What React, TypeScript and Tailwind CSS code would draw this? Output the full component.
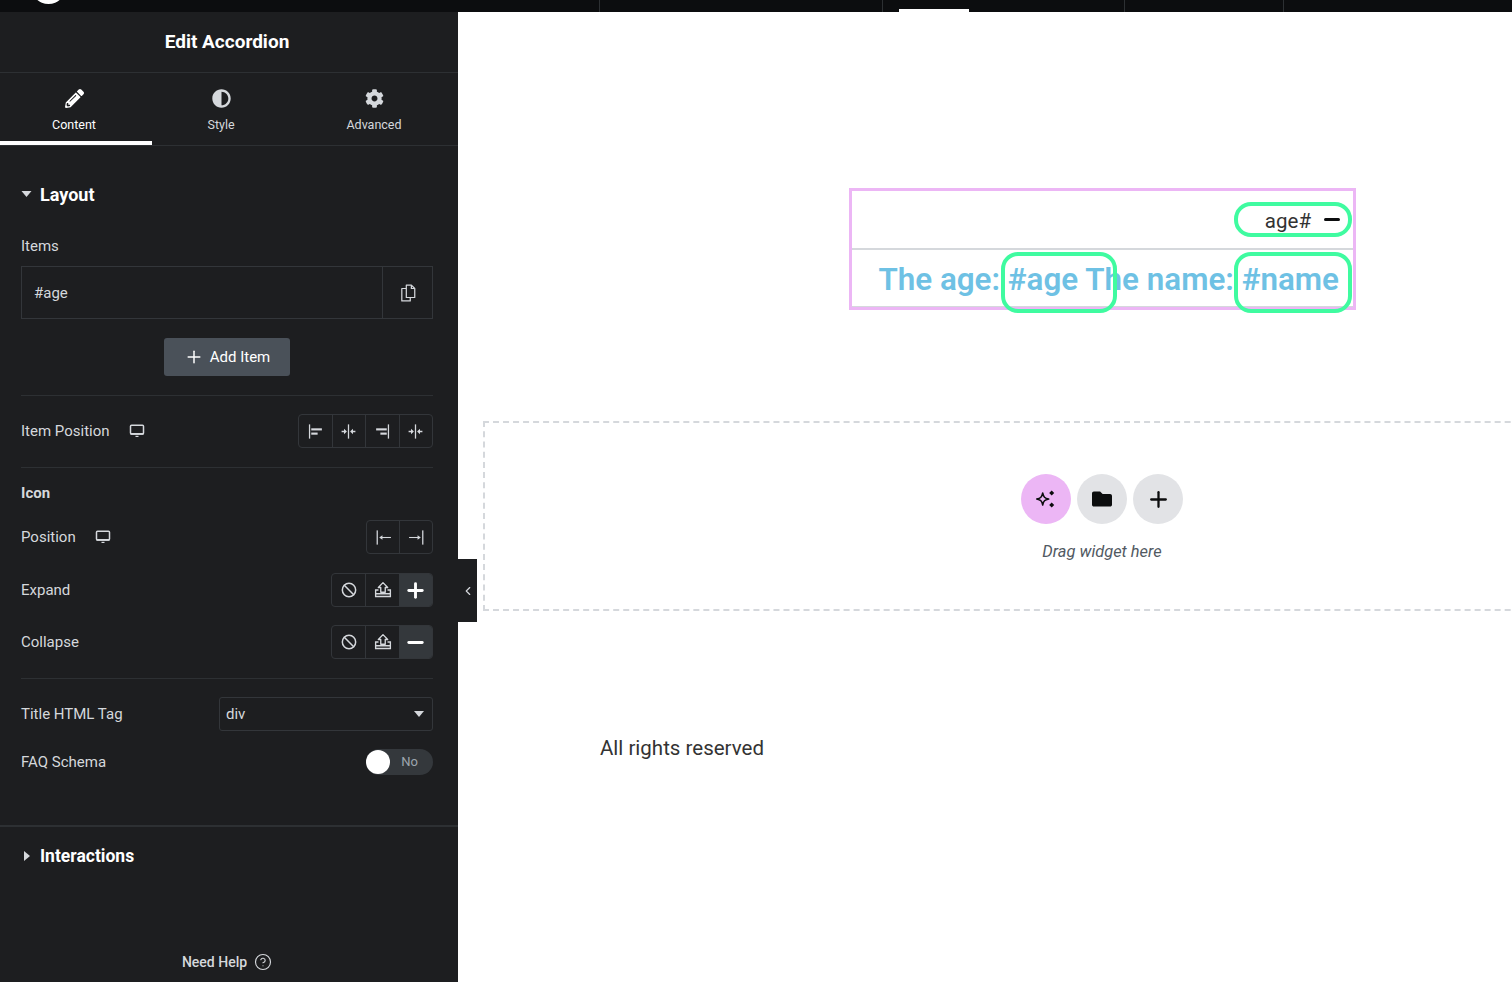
import type { ReactNode } from "react";
import { Ban, ChevronLeft, CircleHelp, Minus, Plus } from "lucide-react";
import { FaAdjust, FaCog, FaFolder, FaPencilAlt } from "react-icons/fa";

function Desktop() {
  return (
    <svg viewBox="0 0 16 16" className="h-4 w-4 text-[#d5d8dc]" fill="none">
      <rect x="1.500" y="2.200" width="13" height="8.800" rx="1" stroke="currentColor" strokeWidth="1.500" />
      <path d="M6.500 12.800h3v1.200h-3z" fill="currentColor" />
      <path d="M1.500 10h13v1.800h-13z" fill="currentColor" />
    </svg>
  );
}

function AlignStart() {
  return (
    <svg viewBox="0 0 16 16" className="h-[17px] w-[17px]" fill="currentColor">
      <rect x="1.800" y="1.300" width="1.200" height="13.400" />
      <rect x="4" y="5" width="10" height="2" />
      <rect x="4" y="9" width="6" height="2" />
    </svg>
  );
}

function AlignEnd() {
  return (
    <svg viewBox="0 0 16 16" className="h-[17px] w-[17px]" fill="currentColor">
      <rect x="13" y="1.300" width="1.200" height="13.400" />
      <rect x="2" y="5" width="10" height="2" />
      <rect x="6" y="9" width="6" height="2" />
    </svg>
  );
}

function AlignMiddle() {
  return (
    <svg viewBox="0 0 16 16" className="h-[17px] w-[17px]" fill="currentColor">
      <rect x="7.400" y="1.300" width="1.200" height="13.400" />
      <path d="M1.500 7.300h2.300V5.300L6.500 8l-2.700 2.700V8.700H1.500z" />
      <path d="M14.500 7.300h-2.300V5.300L9.500 8l2.700 2.700V8.700h2.300z" />
    </svg>
  );
}

function ArrowStart() {
  return (
    <svg viewBox="0 0 16 16" className="h-[17px] w-[17px]" fill="currentColor">
      <rect x="1.500" y="1.300" width="1.200" height="13.400" />
      <rect x="5" y="7.500" width="10" height="1" />
      <path d="M4 8l3-2.200v4.400z" />
    </svg>
  );
}

function ArrowEnd() {
  return (
    <svg viewBox="0 0 16 16" className="h-[17px] w-[17px]" fill="currentColor">
      <rect x="13.300" y="1.300" width="1.200" height="13.400" />
      <rect x="1" y="7.500" width="10" height="1" />
      <path d="M12 8L9 5.800v4.400z" />
    </svg>
  );
}

function Upload() {
  return (
    <svg viewBox="0 0 20 20" className="h-[18px] w-[18px]" fill="none" stroke="currentColor" strokeWidth="1.500">
      <path d="M10 1.800l5.200 5.400h-2.700v5.300h-5V7.200H4.800z" strokeLinejoin="round" />
      <path d="M5 10H1.800v7.200h16.400V10H15" />
      <path d="M1.800 14.200h16.400" />
    </svg>
  );
}

function CopyDocs() {
  return (
    <svg viewBox="0 0 16 16" className="h-[18px] w-[18px]" fill="none" stroke="currentColor" strokeWidth="1.100">
      <path d="M6.500 1h4.500l3 3v8H6.500z" strokeLinejoin="round" />
      <path d="M6.500 4H2.500v11h7.500v-3" strokeLinejoin="round" />
      <path d="M11 1v3h3" />
    </svg>
  );
}

function Sparkles() {
  return (
    <svg viewBox="0 0 20 20" className="h-5 w-5" fill="none">
      <path d="M6.700 4c.8 4 2 5.200 6 6-4 .8-5.200 2-6 6-.8-4-2-5.200-6-6 4-.8 5.200-2 6-6z" stroke="#0c0d0e" strokeWidth="1.500" strokeLinejoin="round" />
      <path d="M15.700 1.500l2.500 2.500-2.500 2.500-2.500-2.500z" fill="#0c0d0e" />
      <path d="M15.700 13.500l2.500 2.500-2.500 2.500-2.500-2.500z" fill="#0c0d0e" />
    </svg>
  );
}

function Segments({ items, width }: { items: ReactNode[]; width: string }) {
  return (
    <div className={`flex h-[34px] overflow-hidden rounded-[4px] border border-[#33363a] text-[#d5d8dc] ${width}`}>
      {items.map((item, i) => (
        <div key={i} className="flex flex-1 items-center justify-center border-l border-[#33363a] first:border-l-0">
          {item}
        </div>
      ))}
    </div>
  );
}

function IconChoice({ active }: { active: ReactNode }) {
  return (
    <div className="flex h-[34px] w-[102px] overflow-hidden rounded-[4px] border border-[#33363a] text-[#d5d8dc]">
      <div className="flex flex-1 items-center justify-center">
        <Ban size={16} strokeWidth={2.25} />
      </div>
      <div className="flex flex-1 items-center justify-center border-l border-[#33363a]">
        <Upload />
      </div>
      <div className="flex flex-1 items-center justify-center bg-[#34383c] text-white">{active}</div>
    </div>
  );
}

function Row({ label, icon, children, className }: { label: string; icon?: boolean; children: ReactNode; className: string }) {
  return (
    <div className={`flex items-center justify-between ${className}`}>
      <div className="flex items-center gap-[19px] text-[15px] text-[#d5d8dc]">
        <span>{label}</span>
        {icon && <Desktop />}
      </div>
      {children}
    </div>
  );
}

function Tab({ icon, label, width, active }: { icon: ReactNode; label: string; width: string; active?: boolean }) {
  return (
    <div className={`flex h-[72px] flex-col items-center pt-[15px] ${width} ${active ? "border-b-4 border-white pr-[4px] text-white" : "text-[#d5d8dc]"}`}>
      <div className="flex h-[20px] items-center text-[19px]">{icon}</div>
      <span className="mt-[9px] text-[12.500px] leading-[16px]">{label}</span>
    </div>
  );
}

function Sidebar() {
  return (
    <aside className="flex h-[970px] w-[458px] shrink-0 flex-col bg-[#1d1e20]">
      <div className="flex h-[61px] items-center justify-center border-b border-[#2d3033] pr-[4px] text-[19px] font-bold text-white">
        Edit Accordion
      </div>
      <div className="flex h-[73px] border-b border-[#2d3033]">
        <Tab icon={<FaPencilAlt />} label="Content" width="w-[152px]" active />
        <Tab icon={<FaAdjust />} label="Style" width="w-[138px]" />
        <Tab icon={<FaCog />} label="Advanced" width="w-[168px]" />
      </div>

      <div className="pl-[21px] pr-[25px]">
        <div className="mt-[38px] flex h-[20px] items-center gap-[8px] text-[18px] font-bold text-white">
          <svg viewBox="0 0 10 6" className="h-[6px] w-[11px]" fill="#d5d8dc">
            <path d="M0 0h10L5 6z" />
          </svg>
          Layout
        </div>
        <div className="mt-[32px] h-[20px] text-[15px] leading-[20px] text-[#d5d8dc]">Items</div>
        <div className="mt-[10px] flex h-[53px] border border-[#33363a] text-[#d5d8dc]">
          <div className="flex flex-1 items-center pl-[12px] pt-[1px] text-[15px]">#age</div>
          <div className="flex w-[50px] items-center justify-center border-l border-[#33363a]">
            <CopyDocs />
          </div>
        </div>
        <div className="mt-[19px] flex justify-center">
          <div className="flex h-[38px] w-[126px] items-center justify-center gap-[6px] rounded-[3px] bg-[#4a5159] text-[15px] text-white">
            <Plus size={20} strokeWidth={1.8} />
            Add Item
          </div>
        </div>
        <div className="mt-[19px] h-px bg-[#2d3033]" />
        <Row label="Item Position" icon className="mt-[18px]">
          <Segments width="w-[135px]" items={[<AlignStart key="a" />, <AlignMiddle key="b" />, <AlignEnd key="c" />, <AlignMiddle key="d" />]} />
        </Row>
        <div className="mt-[19px] h-px bg-[#2d3033]" />
        <div className="mt-[15px] h-[20px] text-[15px] font-bold leading-[20px] text-[#d5d8dc]">Icon</div>
        <Row label="Position" icon className="mt-[17px]">
          <Segments width="w-[67px]" items={[<ArrowStart key="a" />, <ArrowEnd key="b" />]} />
        </Row>
        <Row label="Expand" className="mt-[19px]">
          <IconChoice active={<Plus size={23} strokeWidth={3} />} />
        </Row>
        <Row label="Collapse" className="mt-[18px]">
          <IconChoice active={<Minus size={23} strokeWidth={3} />} />
        </Row>
        <div className="mt-[19px] h-px bg-[#2d3033]" />
        <Row label="Title HTML Tag" className="mt-[18px]">
          <div className="flex h-[34px] w-[214px] items-center justify-between rounded-[3px] border border-[#33363a] pl-[6px] pr-[8px] text-[15px] text-[#d5d8dc]">
            div
            <svg viewBox="0 0 10 6" className="h-[6px] w-[10px]" fill="#d5d8dc">
              <path d="M0 0h10L5 6z" />
            </svg>
          </div>
        </Row>
        <Row label="FAQ Schema" className="mt-[18px]">
          <div className="flex h-[26px] w-[67px] items-center justify-between rounded-full bg-[#34383c] pr-[15px] text-[13px] text-[#9da5ae]">
            <div className="h-[24px] w-[24px] rounded-full bg-white" />
            No
          </div>
        </Row>
      </div>

      <div className="mt-[50px] border-t-2 border-[#2d3033]" />
      <div className="mt-[19px] flex h-[20px] items-center gap-[10px] pl-[24px] text-[17.500px] font-bold text-white">
        <svg viewBox="0 0 6 10" className="h-[10px] w-[6px]" fill="#d5d8dc">
          <path d="M0 0l6 5-6 5z" />
        </svg>
        Interactions
      </div>
      <div className="mt-auto mb-[10px] flex h-[20px] items-center justify-center gap-[7px] pr-[4px] text-[14px] font-medium text-[#d5d8dc]">
        Need Help
        <CircleHelp size={18} strokeWidth={1.5} />
      </div>
    </aside>
  );
}

function Canvas() {
  return (
    <main className="h-[970px] flex-1 overflow-hidden bg-white">
      <div className="relative mt-[176px] ml-[391px] h-[122px] w-[507px] border-[3px] border-[#ecb6f5]">
        <div className="flex h-[59px] items-center justify-end gap-[13px] border-b-2 border-[#d5d8dc] pr-[13px] text-[20.500px] text-[#333333]">
          <span className="mt-[4px]">age#</span>
          <div className="h-[3px] w-[16px] rounded-full bg-[#0c0d0e]" />
        </div>
        <div className="flex h-[57px] items-center justify-end border-b border-[#d5d8dc] pr-[14px] pt-[4px] text-[31.400px] font-semibold text-[#6ec1e4]">
          The age: #age The name: #name
        </div>
        <div className="absolute -left-[3px] -top-[3px] h-0 w-0">
          <div className="absolute left-[385px] top-[14px] h-[35px] w-[118px] rounded-[17px] border-4 border-[#3ffba0]" />
          <div className="absolute left-[152px] top-[64px] h-[61px] w-[116px] rounded-[17px] border-4 border-[#3ffba0]" />
          <div className="absolute left-[385px] top-[64px] h-[61px] w-[118px] rounded-[17px] border-4 border-[#3ffba0]" />
        </div>
      </div>

      <div className="mt-[111px] ml-[25px] flex h-[190px] w-[1238px] flex-col items-center border-2 border-dashed border-[#d5d8dc]">
        <div className="mt-[51px] flex gap-[6px]">
          <div className="flex h-[50px] w-[50px] items-center justify-center rounded-full bg-[#ecb6f5]">
            <Sparkles />
          </div>
          <div className="flex h-[50px] w-[50px] items-center justify-center rounded-full bg-[#e2e3e6] text-[20px] text-[#0c0d0e]">
            <FaFolder />
          </div>
          <div className="flex h-[50px] w-[50px] items-center justify-center rounded-full bg-[#e2e3e6] text-[#0c0d0e]">
            <Plus size={25} strokeWidth={2.2} />
          </div>
        </div>
        <div className="mt-[18px] text-[16.400px] italic leading-[20px] text-[#515962]">Drag widget here</div>
      </div>

      <div className="mt-[125px] ml-[142px] text-[20.500px] leading-[24px] text-[#333333]">All rights reserved</div>
    </main>
  );
}

export default function App() {
  return (
    <div className="relative h-[982px] w-[1512px] overflow-hidden bg-white font-['Roboto',sans-serif]">
      <div className="relative flex h-[12px] overflow-hidden bg-[#0c0d0f]">
        <div className="w-[600px] border-r border-[#2d3033]" />
        <div className="w-[283px] border-r border-[#2d3033]" />
        <div className="w-[242px] border-r border-[#2d3033]" />
        <div className="w-[159px] border-r border-[#2d3033]" />
        <div className="absolute left-[31px] top-[-31px] h-[35px] w-[35px] rounded-full bg-white" />
        <div className="absolute bottom-0 left-[899px] h-[3px] w-[70px] bg-white" />
      </div>
      <div className="flex">
        <Sidebar />
        <Canvas />
      </div>
      <div className="absolute left-[458px] top-[559px] flex h-[63px] w-[19px] items-center justify-center bg-[#1d1e20] text-[#d5d8dc]">
        <ChevronLeft size={14} strokeWidth={2} />
      </div>
    </div>
  );
}
